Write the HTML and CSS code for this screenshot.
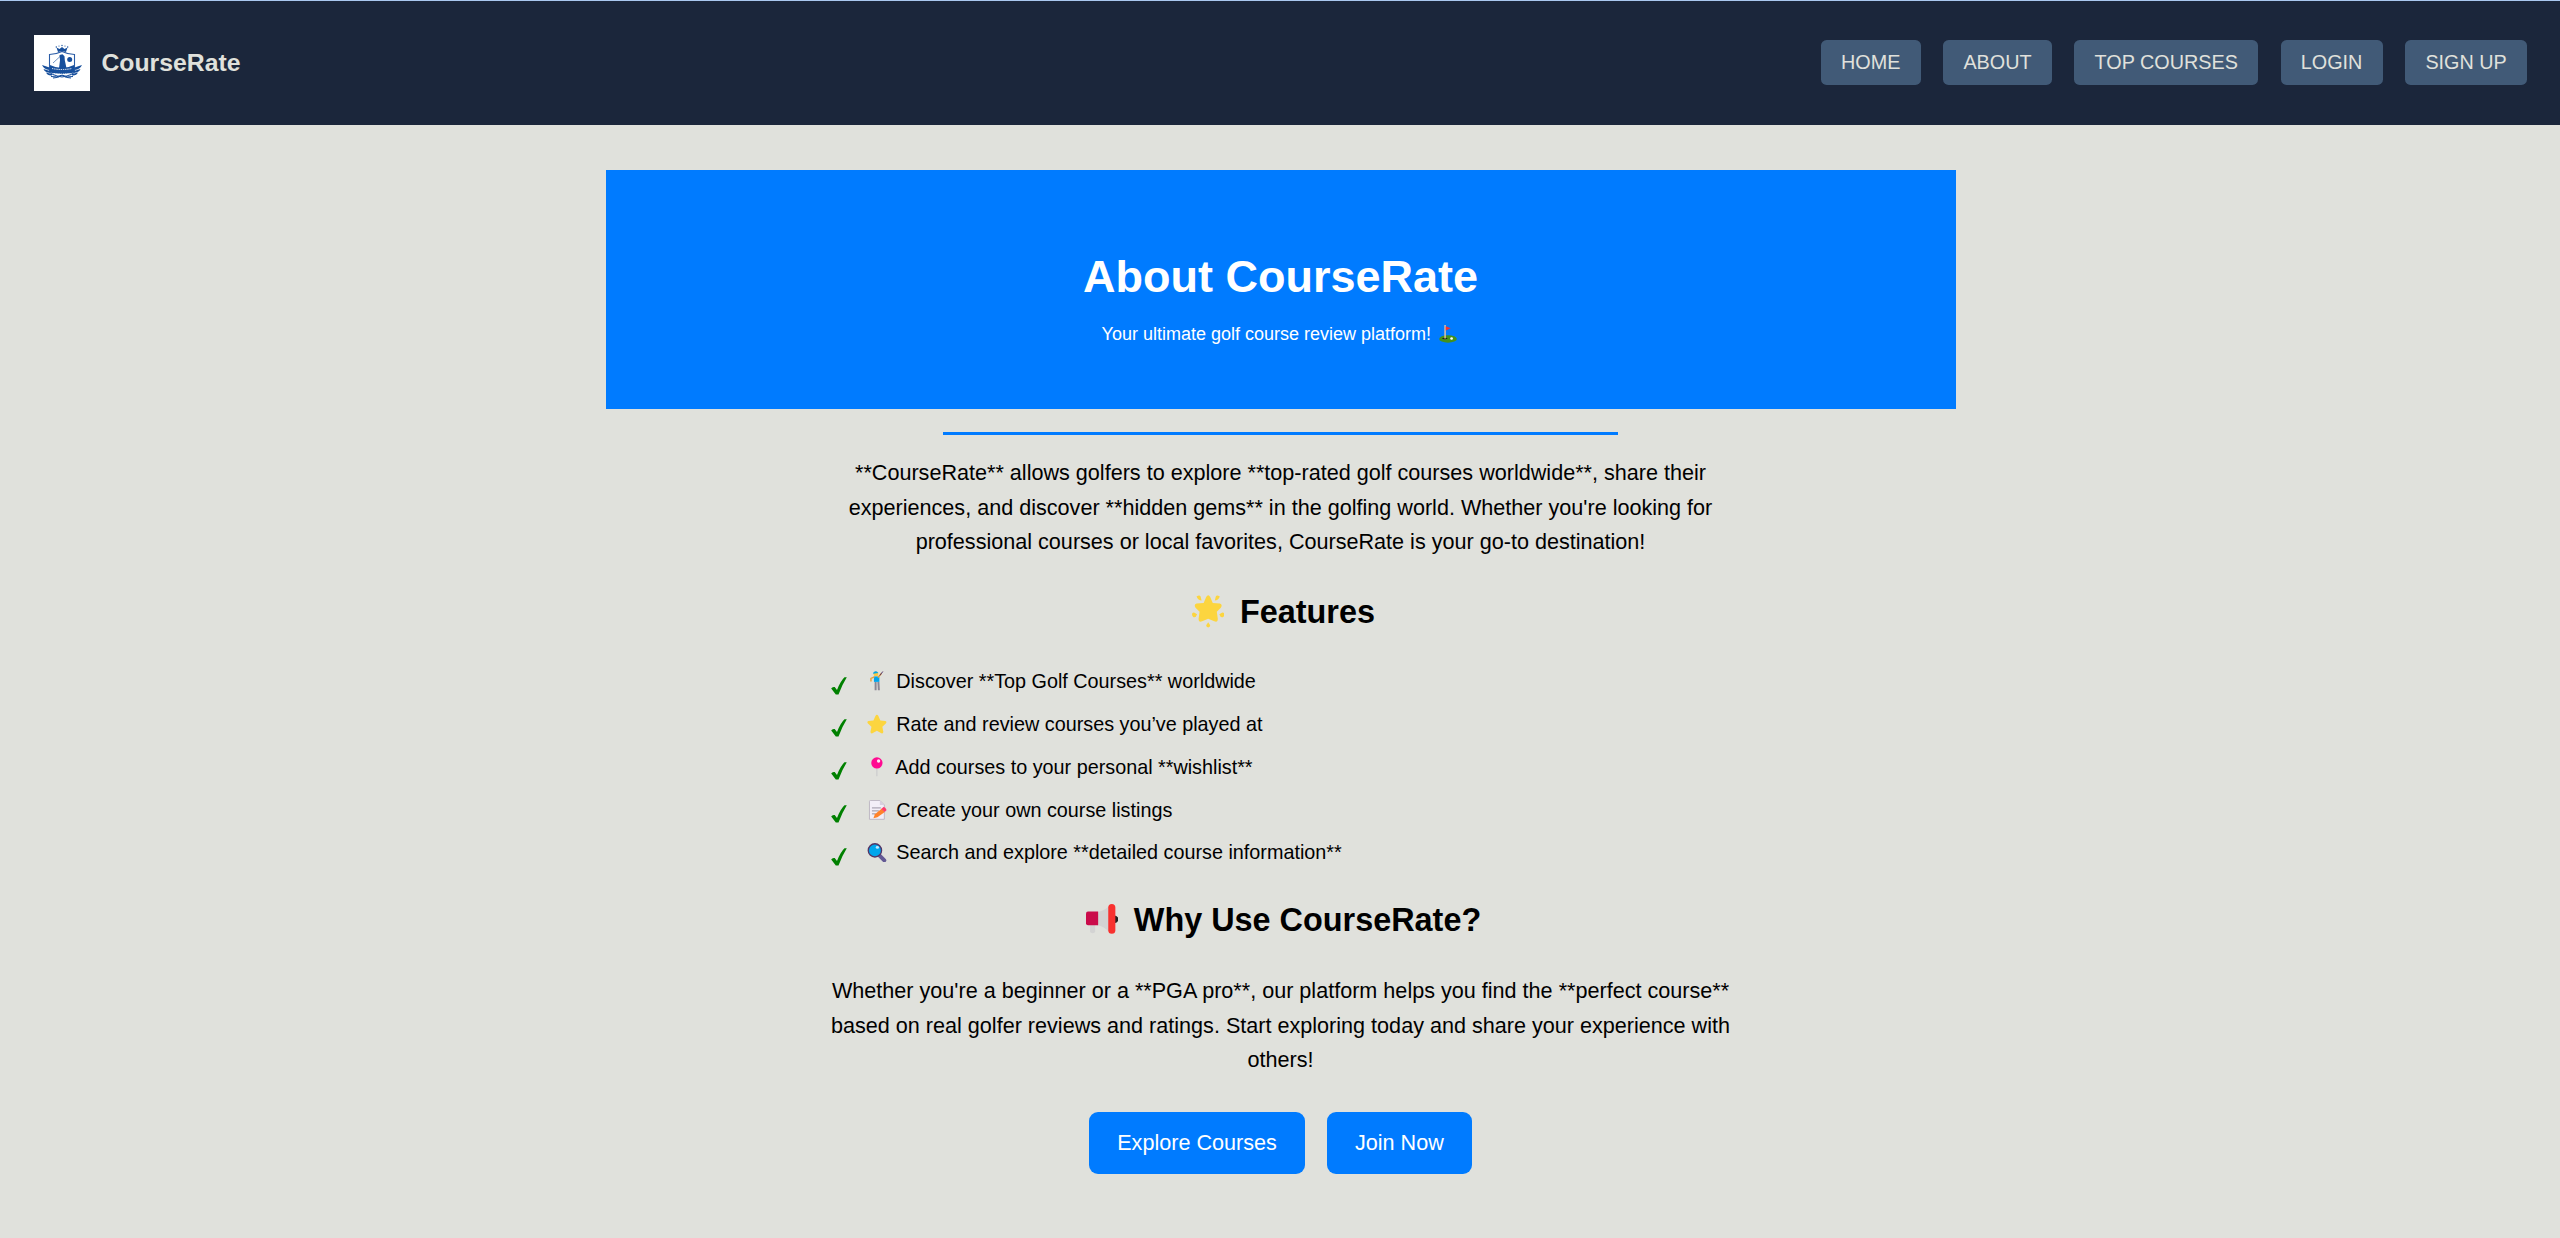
FILE: index.html
```html
<!DOCTYPE html>
<html lang="en">
<head>
<meta charset="utf-8">
<title>About CourseRate</title>
<link rel="stylesheet" href="styles.css">
</head>
<body>
<header class="header">
  <div class="brand">
    <svg class="logo" viewBox="0 0 56 56" aria-hidden="true">
      <rect width="56" height="56" fill="#fff"/>
      <path d="M15.500 19.500q7-.3 12.500-3 5.500 2.700 12.500 3v17.500q-2 3-12.500 5-10.500-2-12.500-5z" fill="#fff" stroke="#2a5ca6" stroke-width="1.100"/>
      <g fill="#174f9c">
        <path d="M22.500 12.500l3 1.500 2.500-2 2.500 2 3-1.500-1.500 4.500q-4-1.500-8 0z"/>
        <circle cx="22.300" cy="12" r=".7"/><circle cx="25" cy="11" r=".6"/><circle cx="28" cy="10.500" r=".7"/><circle cx="31" cy="11" r=".6"/><circle cx="33.700" cy="12" r=".7"/>
        <path d="M25.500 20l3-.7 2 2 .3 4 1.700 8h-7.500l1-8z"/>
        <path d="M19 28l7-6.500" stroke="#174f9c" stroke-width=".6"/>
        <circle cx="35.700" cy="24.500" r="2.500"/>
        <path d="M16 30q6 3 12 3t12-3v7.500q-12 3-24 0z"/>
        <path d="M8 30l7.500 2.500v2.500q-5.500-.5-7.500-5zM9.500 34l6.500 2v1.800q-5 0-6.500-3.800zM12 37.500l6 1.500v1.500q-4.500.5-6-3zM48 30l-7.500 2.500v2.500q5.500-.5 7.500-5zM46.500 34l-6.500 2v1.800q5 0 6.500-3.800zM44 37.500l-6 1.500v1.500q4.500.5 6-3z"/>
      </g>
      <path d="M17 41.500q5.500 1.500 11-1.500 5.500 3 11 1.500M19 43q5 0 9-2.500 4 2.500 9 2.500" fill="none" stroke="#174f9c" stroke-width="1"/>
      <path d="M18 33.500q10 2 20 0" fill="none" stroke="#fff" stroke-width="1" stroke-dasharray="1.300 .9"/>
      <path d="M20 38.500q8 1 16 0" fill="none" stroke="#fff" stroke-width=".9" stroke-dasharray="1.500 .7"/>
    </svg>
    <span class="brand-name">CourseRate</span>
  </div>
  <nav class="nav">
    <a class="nav-link">HOME</a>
    <a class="nav-link">ABOUT</a>
    <a class="nav-link">TOP COURSES</a>
    <a class="nav-link">LOGIN</a>
    <a class="nav-link">SIGN UP</a>
  </nav>
</header>
<main class="main">
  <section class="hero">
    <h1 class="hero-title">About CourseRate</h1>
    <p class="hero-text">Your ultimate golf course review platform! <svg class="emoji" viewBox="0 0 20 20" aria-hidden="true"><ellipse cx="10" cy="15.500" rx="9.800" ry="4.200" fill="#44911b"/><ellipse cx="6.500" cy="15" rx="3" ry=".8" fill="#1c1c1c"/><path d="M6 0h1.500v15H6z" fill="#f3c9a0"/><path d="M7.500 1.500l5.500 2-5.500 2.500z" fill="#f92f2f"/><circle cx="14" cy="15" r="1.500" fill="#fff"/></svg></p>
  </section>
  <hr class="divider">
  <div class="content">
    <p class="lead">**CourseRate** allows golfers to explore **top-rated golf courses worldwide**, share their experiences, and discover **hidden gems** in the golfing world. Whether you're looking for professional courses or local favorites, CourseRate is your go-to destination!</p>
    <h2 class="heading"><svg class="emoji" viewBox="0 0 32 32" aria-hidden="true"><g fill="#fcd53f"><path d="M14 2q2-3.500 4 0l2.500 6 7 .5q3 1 1 4l-4 4 1 7q0 4-3.500 2.500L16 23.500l-6 2.500q-3.500 1.500-3.500-2.500l1-7-4-4q-2-3 1-4l7-.5z"/><path d="M4.500 1.500q3-2 4 0l1 4q-3.500 0-5-4zM27.500 1.500q-3-2-4 0l-1 4q3.500 0 5-4zM0 19q0-2 2.500-1.500L5 19q-1 3.500-3.500 3Q0 21 0 19zM32 19q0-2-2.500-1.500L27 19q1 3.500 3.500 3Q32 21 32 19zM16 27l2 3q0 2-2 2t-2-2z"/></g></svg> Features</h2>
    <ul class="features">
      <li class="feature"><span class="check"><svg viewBox="0 0 16 18" aria-hidden="true"><path d="M.2 11.500q1-2 3.500-1.500L6 13Q9.500 4 13.500.3h2.300Q11 8 7.500 17.500H4.800z" fill="green"/></svg></span><span><svg class="emoji" viewBox="0 0 20 20" aria-hidden="true"><circle cx="9" cy="3" r="2.500" fill="#ffc83d"/><path d="M6 2.800Q6.500-.5 10 .5l1.500 1.500z" fill="#00a6ed"/><path d="M7 5.500h5.500V11H7z" fill="#00a6ed"/><path d="M11 6.500l3.500-4M7.500 6L4 7.500v3" fill="none" stroke="#e7a33c" stroke-width="1.500"/><path d="M13 4.500L16 .5" stroke="#533566" stroke-width="1"/><path d="M8.700 11v8.500M11.500 11l.5 8.500" stroke="#8c8794" stroke-width="2"/></svg> Discover **Top Golf Courses** worldwide</span></li>
      <li class="feature"><span class="check"><svg viewBox="0 0 16 18" aria-hidden="true"><path d="M.2 11.500q1-2 3.500-1.500L6 13Q9.500 4 13.500.3h2.300Q11 8 7.500 17.500H4.800z" fill="green"/></svg></span><span><svg class="emoji" viewBox="0 0 20 20" aria-hidden="true"><path d="M8.500 2q1.500-2.500 3 0l2 4.500 5 .5q2 .5.500 2.500l-3.500 3.500 1 5q0 2-2 1.500L10 17l-4.500 2.500q-2 .5-2-1.500l1-5L1 9.500Q-.5 7.500 1.500 7l5-.5z" fill="#fcd53f"/></svg> Rate and review courses you’ve played at</span></li>
      <li class="feature"><span class="check"><svg viewBox="0 0 16 18" aria-hidden="true"><path d="M.2 11.500q1-2 3.500-1.500L6 13Q9.500 4 13.500.3h2.300Q11 8 7.500 17.500H4.800z" fill="green"/></svg></span><span><svg class="emoji" viewBox="0 0 20 20" aria-hidden="true"><path d="M9.500 11h1v8.500h-1z" fill="#c6c6c9"/><circle cx="10" cy="6" r="5.700" fill="#ff0a91"/><circle cx="11.700" cy="4" r="1.700" fill="#fff" opacity=".9"/></svg> Add courses to your personal **wishlist**</span></li>
      <li class="feature"><span class="check"><svg viewBox="0 0 16 18" aria-hidden="true"><path d="M.2 11.500q1-2 3.500-1.500L6 13Q9.500 4 13.500.3h2.300Q11 8 7.500 17.500H4.800z" fill="green"/></svg></span><span><svg class="emoji" viewBox="0 0 20 20" aria-hidden="true"><path d="M3.500.5h9.500l4.500 4.500v14.500h-15V1.500q0-1 1-1z" fill="#f3eef8" stroke="#b4acbc" stroke-width=".8"/><path d="M13 .5V5h4.500z" fill="#d8d0df"/><path d="M5 8h9M5 11h7M5 14h4" stroke="#9b93a5" stroke-width="1"/><path d="M6.500 18.500l1.500-4 7-6 3 3.500-7.500 5.500z" fill="#ff822d"/><path d="M14.500 9l1.800-1.800q2-.7 3.500 2.800L18 12z" fill="#ff3a6b"/></svg> Create your own course listings</span></li>
      <li class="feature"><span class="check"><svg viewBox="0 0 16 18" aria-hidden="true"><path d="M.2 11.500q1-2 3.500-1.500L6 13Q9.500 4 13.500.3h2.300Q11 8 7.500 17.500H4.800z" fill="green"/></svg></span><span><svg class="emoji" viewBox="0 0 20 20" aria-hidden="true"><path d="M12 12l5.500 5.500" stroke="#635994" stroke-width="4" stroke-linecap="round"/><circle cx="8" cy="7.500" r="6.700" fill="#00a6ed" stroke="#533566" stroke-width="1.400"/><ellipse cx="10.500" cy="4.500" rx="1.700" ry="1.400" fill="#bfeaff"/></svg> Search and explore **detailed course information**</span></li>
    </ul>
    <h2 class="heading heading-why"><svg class="emoji" viewBox="0 0 32 32" aria-hidden="true"><path d="M4 21h5v7q0 2-2.500 2T4 28z" fill="#d3d3d3"/><path d="M11 9q7-1 12-6v26q-5-6-12-7z" fill="#d3d3d3"/><path d="M28 12q4 1 4 4t-4 4z" fill="#212121"/><path d="M2 8.500h10V22H2q-2 0-2-2v-9.500q0-2 2-2z" fill="#ca0b4a"/><rect x="22" y="1" width="7" height="29.500" rx="3.500" fill="#f8312f"/></svg> Why Use CourseRate?</h2>
    <p class="lead lead-why">Whether you're a beginner or a **PGA pro**, our platform helps you find the **perfect course** based on real golfer reviews and ratings. Start exploring today and share your experience with others!</p>
    <div class="actions">
      <a class="button">Explore Courses</a>
      <a class="button">Join Now</a>
    </div>
  </div>
</main>
</body>
</html>
```
FILE: styles.css
```css
* { box-sizing: border-box; }

body {
  margin: 0;
  height: 1238px;
  overflow: hidden;
  background: #e0e1dc;
  color: #000;
  font-family: "Liberation Sans", Arial, sans-serif;
  border-top: 1px solid #aac8f0;
}

.header {
  display: flex;
  align-items: center;
  justify-content: space-between;
  height: 124px;
  padding: 0 33px 0 34px;
  background: #1b263b;
  color: #e0e1dc;
}

.brand { display: flex; align-items: center; gap: 11.5px; }
.logo { width: 56px; height: 56px; display: block; }
.brand-name { font-size: 24.75px; font-weight: bold; line-height: 28px; }

.nav { display: flex; gap: 22.5px; padding-bottom: 2px; }
.nav-link {
  height: 45px;
  padding: 0 20.25px;
  border-radius: 5.6px;
  background: #415a77;
  font-size: 19.8px;
  line-height: 44px;
}

.main { padding: 45px 0 0 1px; }

.hero {
  width: 1350px;
  height: 239px;
  margin: 0 auto;
  padding-top: 81px;
  background: #007bff;
  color: #fff;
  text-align: center;
}
.hero-title { margin: 0; font-size: 45px; line-height: 52px; }
.hero-text { margin: 21px 0 0; font-size: 18px; line-height: 21px; }

.divider {
  width: 675px;
  height: 3px;
  margin: 23px auto 0;
  border: 0;
  background: #007bff;
}

.content { width: 900px; margin: 0 auto; }
.lead {
  margin: 21px 0 0;
  font-size: 21.6px;
  line-height: 34.56px;
  text-align: center;
}
.lead-why { margin-top: 35px; }

.emoji {
  width: 1em;
  height: 1em;
  margin: 0 .15em;
  vertical-align: -.15em;
}
.heading {
  margin: 33.5px 0 0;
  font-size: 32.4px;
  line-height: 38px;
  text-align: center;
}
.heading-why { margin-top: 27px; }
.heading .emoji { margin: 0 .21em 0 .18em; vertical-align: -.14em; }

.features { margin: 29px 0 0; padding: 0; list-style: none; }
.feature {
  display: flex;
  height: 42.8px;
  padding-top: 10px;
  font-size: 19.8px;
  line-height: 23px;
}
.check { width: 34px; padding: 6.5px 0 0 .5px; }
.check svg { display: block; width: 16px; height: 18px; }
.feature .emoji { margin-right: .18em; }

.actions { display: flex; justify-content: center; gap: 22px; margin-top: 34.3px; }
.button {
  height: 62px;
  padding: 0 28.1px;
  border-radius: 9px;
  background: #007bff;
  color: #fff;
  font-size: 21.6px;
  line-height: 61px;
}
```
